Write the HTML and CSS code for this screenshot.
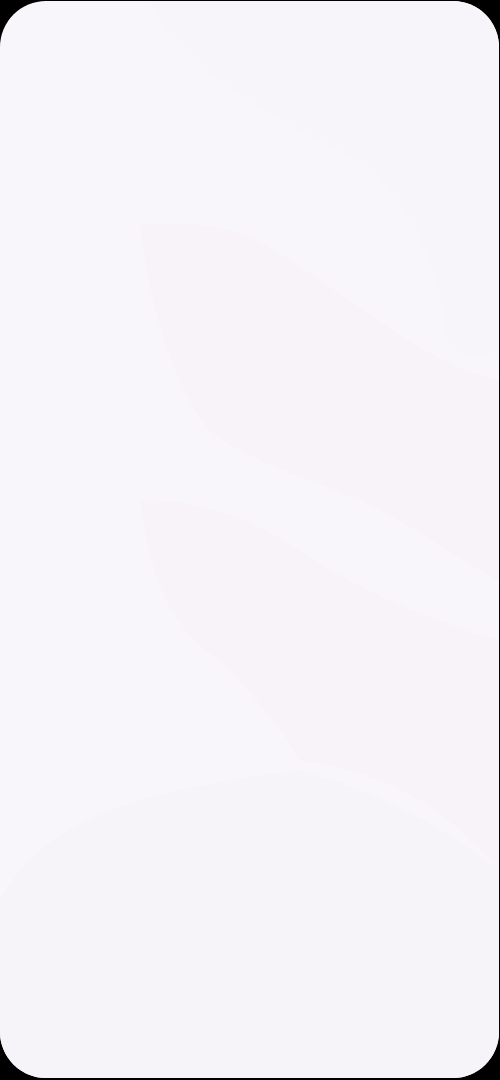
FILE: index.html
```html
<!DOCTYPE html>
<html lang="en">
<head>
  <meta charset="UTF-8">
  <meta name="viewport" content="width=device-width, initial-scale=1.0">
  <title>Wallpaper</title>
  <link rel="stylesheet" href="styles.css">
</head>
<body>
  <div class="screen">
    <svg class="waves" viewBox="0 0 500 1078" preserveAspectRatio="none">
      <path class="wave-a" d="M150 0 C170 60 260 110 340 150 C410 190 440 260 450 350 L500 360 L500 0 Z"/>
      <path class="wave-b" d="M140 225 C150 300 170 380 210 430 C260 470 330 480 400 520 C450 550 480 570 500 580 L500 380 C460 370 420 350 380 320 C320 280 270 240 230 230 C190 220 160 222 140 225 Z"/>
      <path class="wave-c" d="M140 500 C150 560 160 620 220 660 C260 700 290 740 300 760 C380 770 440 800 500 870 L500 640 C430 620 360 590 300 550 C240 510 190 500 140 500 Z"/>
      <path class="wave-d" d="M0 900 C40 820 140 790 300 770 C380 790 450 830 500 870 L500 1078 L0 1078 Z"/>
    </svg>
  </div>
</body>
</html>
```

FILE: styles.css
```css
* {
  margin: 0;
  padding: 0;
  box-sizing: border-box;
}

html,
body {
  width: 100%;
  height: 100%;
  background: #000;
}

body {
  padding: 1px 1px 2px 0;
  font-family: "Liberation Sans", Arial, sans-serif;
}

.screen {
  width: 100%;
  height: 100%;
  border-radius: 46px;
  background: #f8f6fb;
  overflow: hidden;
}

.waves {
  display: block;
  width: 100%;
  height: 100%;
}

.wave-a {
  fill: #f7f5fa;
}

.wave-b {
  fill: #f7f3f8;
}

.wave-c {
  fill: #f7f3f8;
}

.wave-d {
  fill: #f7f4f9;
}
```
